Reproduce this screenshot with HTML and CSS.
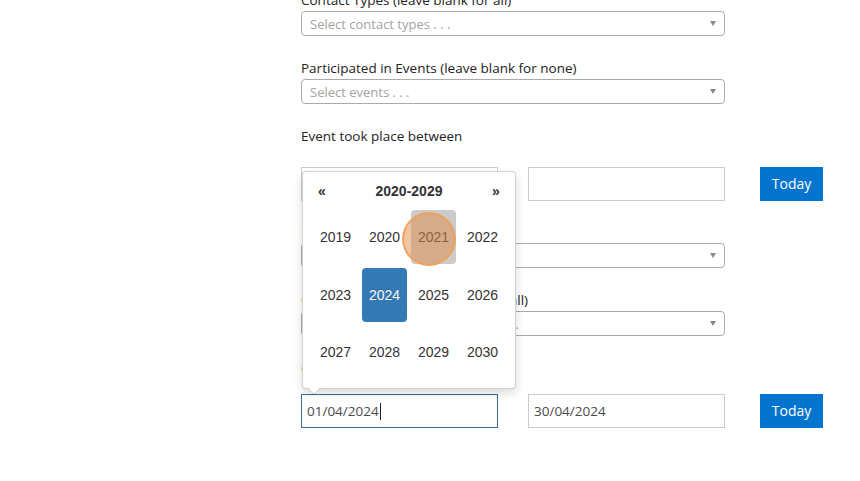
FILE: index.html
```html
<!DOCTYPE html>
<html>
<head>
<meta charset="utf-8">
<link rel="stylesheet" href="styles.css">
</head>
<body>
<div class="form">
  <div class="group">
    <div class="label">Contact Types (leave blank for all)</div>
    <div class="select"><span class="ph">Select contact types . . .</span><span class="caret-down"></span></div>
  </div>
  <div class="group">
    <div class="label">Participated in Events (leave blank for none)</div>
    <div class="select"><span class="ph">Select events . . .</span><span class="caret-down"></span></div>
  </div>
  <div class="group group-tight">
    <div class="label label-gap">Event took place between</div>
    <div class="daterow">
      <div class="dinput"></div>
      <div class="dinput second"></div>
      <div class="today">Today</div>
    </div>
  </div>
  <div class="group">
    <div class="label">Event Type</div>
    <div class="select"><span class="ph">Select event type . . .</span><span class="caret-down"></span></div>
  </div>
  <div class="group">
    <div class="label">Contact Statuses (leave blank for all)</div>
    <div class="select"><span class="ph">Select mailing list subscriptions . . .</span><span class="caret-down"></span></div>
  </div>
  <div class="group">
    <div class="label label-gap2">Contact created between</div>
    <div class="daterow">
      <div class="dinput focus">01/04/2024<span class="cursor"></span></div>
      <div class="dinput second">30/04/2024</div>
      <div class="today">Today</div>
    </div>
  </div>
</div>

<div class="picker">
  <div class="phead">
    <span class="pnav">&laquo;</span>
    <span class="ptitle">2020-2029</span>
    <span class="pnav">&raquo;</span>
  </div>
  <div class="years">
    <span class="yr">2019</span>
    <span class="yr">2020</span>
    <span class="yr hover">2021</span>
    <span class="yr">2022</span>
    <span class="yr">2023</span>
    <span class="yr active">2024</span>
    <span class="yr">2025</span>
    <span class="yr">2026</span>
    <span class="yr">2027</span>
    <span class="yr">2028</span>
    <span class="yr">2029</span>
    <span class="yr">2030</span>
  </div>
</div>
<div class="click"></div>
</body>
</html>
```

FILE: styles.css
```css
html, body {
  margin: 0;
  padding: 0;
  background: #fff;
  overflow: hidden;
}
body {
  width: 860px;
  height: 481px;
  position: relative;
  font-family: "Open Sans", "Liberation Sans", sans-serif;
  color: #333;
}
.form {
  margin-left: 301px;
  margin-top: -10px;
  width: 424px;
}
.group {
  margin-bottom: 22px;
}
.group-tight {
  margin-bottom: 21px;
}
.label {
  font-size: 13.5px;
  line-height: 20px;
  height: 20px;
  margin-bottom: 1px;
  white-space: nowrap;
  color: #222;
}
.label-gap { margin-bottom: 21px; }
.label-gap2 { margin-bottom: 16px; }
.select {
  box-sizing: border-box;
  height: 25px;
  border: 1px solid #aaa;
  border-radius: 4px;
  display: flex;
  align-items: center;
  padding: 0 8px 0 8px;
  justify-content: space-between;
}
.ph {
  font-size: 13px;
  color: #a3a3a3;
  white-space: nowrap;
}
.caret-down {
  width: 0;
  height: 0;
  border-left: 3.5px solid transparent;
  border-right: 3.5px solid transparent;
  border-top: 5px solid #888;
  margin-right: 0;
}
.daterow {
  display: flex;
  align-items: flex-start;
  width: 522px;
}
.dinput {
  box-sizing: border-box;
  width: 197px;
  height: 34px;
  border: 1px solid #ccc;
  font-size: 13.5px;
  color: #4a4a4a;
  padding: 0 5px;
  display: flex;
  align-items: center;
}
.dinput.second {
  margin-left: 30px;
}
.dinput.focus {
  border-color: #3b6f93;
}
.cursor {
  display: inline-block;
  width: 1px;
  height: 17px;
  background: #222;
  margin-left: 1px;
}
.today {
  box-sizing: border-box;
  margin-left: 35px;
  width: 63px;
  height: 34px;
  padding-bottom: 1px;
  background: #0474cf;
  color: #fff;
  font-size: 14px;
  display: flex;
  align-items: center;
  justify-content: center;
}

.picker {
  position: absolute;
  left: 302px;
  top: 171px;
  width: 196px;
  padding: 4px 8px 7px 8px;
  background: #fff;
  border: 1px solid rgba(0,0,0,0.18);
  border-radius: 4px;
  box-shadow: 0 4px 10px rgba(0,0,0,0.15);
  font-family: "Liberation Sans", Arial, sans-serif;
  font-size: 14px;
  color: #333;
}
.picker::before {
  content: "";
  position: absolute;
  left: 4px;
  bottom: -7px;
  border-left: 7px solid transparent;
  border-right: 7px solid transparent;
  border-top: 7px solid rgba(0,0,0,0.18);
}
.picker::after {
  content: "";
  position: absolute;
  left: 5px;
  bottom: -6px;
  border-left: 6px solid transparent;
  border-right: 6px solid transparent;
  border-top: 6px solid #fff;
}
.phead {
  height: 30px;
  display: flex;
  align-items: center;
  justify-content: space-between;
  font-weight: bold;
}
.pnav {
  width: 22px;
  text-align: center;
  font-size: 14px;
}
.ptitle {
  flex: 1;
  text-align: center;
}
.years {
  padding-top: 2px;
  display: flex;
  flex-wrap: wrap;
}
.yr {
  width: 45px;
  height: 54px;
  line-height: 54px;
  margin: 2px 2px 1.5px 2px;
  text-align: center;
  border-radius: 4px;
}
.yr.hover {
  background: #cbcbcb;
}
.yr.active {
  background: #337ab7;
  color: #fff;
  text-shadow: 0 -1px 0 rgba(0,0,0,0.25);
}
.click {
  position: absolute;
  left: 402px;
  top: 212px;
  width: 50px;
  height: 50px;
  border-radius: 50%;
  background: rgba(224,140,72,0.5);
  border: 2px solid rgba(240,160,90,0.9);
}
```
